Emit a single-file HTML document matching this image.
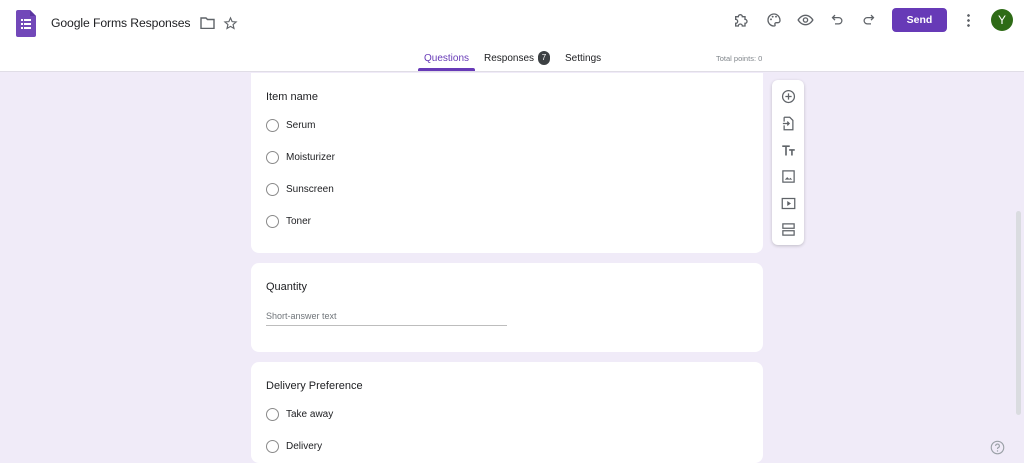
<!DOCTYPE html><html><head><style>
*{margin:0;padding:0;box-sizing:border-box}
body{width:1024px;height:463px;overflow:hidden;background:#f0ebf8;font-family:"Liberation Sans",Arial,sans-serif;position:relative;color:#202124}
.hdr{position:absolute;left:0;top:0;width:1024px;height:72px;background:#fff;border-bottom:1px solid #e0dde6}
.abs{position:absolute}
.card{position:absolute;left:251px;width:512px;background:#fff;border-radius:8px}
.q{position:absolute;left:15px;font-size:11px;color:#202124}
.opt{position:absolute;left:15px;font-size:10px;color:#202124;display:flex;align-items:center}
.opt i{display:inline-block;width:13px;height:13px;border:1.2px solid #8a8a8a;border-radius:50%;margin-right:7px}
.tb svg{position:absolute;left:9px}
</style></head><body>
<div class="hdr">
<svg class="abs" style="left:16px;top:10px" width="20" height="27" viewBox="0 0 20 27"><path d="M2 0h12l6 6v19a2 2 0 0 1-2 2H2a2 2 0 0 1-2-2V2a2 2 0 0 1 2-2z" fill="#7248b9"/><path d="M14 0v6h6z" fill="#5a35a0"/><g fill="#fff"><rect x="5" y="9" width="2" height="2"/><rect x="8" y="9" width="7" height="2"/><rect x="5" y="13" width="2" height="2"/><rect x="8" y="13" width="7" height="2"/><rect x="5" y="17" width="2" height="2"/><rect x="8" y="17" width="7" height="2"/></g></svg>
<div class="abs" style="left:51px;top:16px;font-size:12.2px;color:#202124;letter-spacing:-0.1px">Google Forms Responses</div>
<svg class="abs" style="left:200px;top:17px" width="15" height="12" viewBox="0 0 15 12"><path d="M1 1h5l1.5 1.5H14v9H1z" fill="none" stroke="#5f6368" stroke-width="1.4"/></svg>
<svg class="abs" style="left:223px;top:16px" width="15" height="15" viewBox="0 0 24 24"><path d="M12 3l2.6 6 6.4.5-4.9 4.2 1.5 6.3L12 16.6 6.4 20l1.5-6.3L3 9.5 9.4 9z" fill="none" stroke="#5f6368" stroke-width="1.8"/></svg>
<svg class="abs" style="left:733px;top:12px" width="16" height="16" viewBox="0 0 24 24"><path d="M4 7h4a3 3 0 0 1 6 0h4v4a3 3 0 0 1 0 6v4h-4a3 3 0 0 0-6 0H4v-4a3 3 0 0 0 0-6z" fill="none" stroke="#5f6368" stroke-width="2"/></svg>
<svg class="abs" style="left:766px;top:12px" width="16" height="16" viewBox="0 0 24 24"><path d="M12 3a9 9 0 0 0 0 18c1.5 0 2-1 1.5-2-.7-1.3.2-3 1.8-3H18a3 3 0 0 0 3-3c0-5.5-4-10-9-10z" fill="none" stroke="#5f6368" stroke-width="2"/><circle cx="7.5" cy="11" r="1.4" fill="#5f6368"/><circle cx="10" cy="7" r="1.4" fill="#5f6368"/><circle cx="15" cy="7" r="1.4" fill="#5f6368"/></svg>
<svg class="abs" style="left:797px;top:12px" width="17" height="16" viewBox="0 0 24 24"><path d="M1 12s4-7 11-7 11 7 11 7-4 7-11 7S1 12 1 12z" fill="none" stroke="#5f6368" stroke-width="2"/><circle cx="12" cy="12" r="3.2" fill="none" stroke="#5f6368" stroke-width="2"/></svg>
<svg class="abs" style="left:830px;top:12px" width="15" height="15" viewBox="0 0 24 24"><path d="M8 5L4 9l4 4M4 9h10a5 5 0 0 1 0 10H8" fill="none" stroke="#5f6368" stroke-width="2"/></svg>
<svg class="abs" style="left:861px;top:12px" width="15" height="15" viewBox="0 0 24 24"><path d="M16 5l4 4-4 4M20 9H10a5 5 0 0 0 0 10h6" fill="none" stroke="#5f6368" stroke-width="2"/></svg>
<div class="abs" style="left:892px;top:8px;width:55px;height:24px;background:#673ab7;border-radius:4px;color:#fff;font-size:10.5px;font-weight:bold;text-align:center;line-height:24px">Send</div>
<div class="abs" style="left:967px;top:13px;width:3px;height:14px;background:radial-gradient(circle,#5f6368 1.2px,transparent 1.5px) 0 0/3px 5px"></div>
<div class="abs" style="left:991px;top:9px;width:22px;height:22px;border-radius:50%;background:#2e6b16;color:#fff;font-size:12px;text-align:center;line-height:22px">Y</div>
<div class="abs" style="left:424px;top:53px;font-size:10px;color:#673ab7">Questions</div>
<div class="abs" style="left:418px;top:68px;width:57px;height:3px;background:#673ab7;border-radius:2px 2px 0 0"></div>
<div class="abs" style="left:484px;top:53px;font-size:10px;color:#202124">Responses</div>
<div class="abs" style="left:538px;top:51px;width:12px;height:14px;border-radius:6px;background:#3c4043;color:#fff;font-size:8px;text-align:center;line-height:14px">7</div>
<div class="abs" style="left:565px;top:53px;font-size:10px;color:#202124">Settings</div>
<div class="abs" style="left:716px;top:54px;font-size:7.5px;color:#80868b">Total points: 0</div>
</div>
<div class="card" style="top:73px;height:180px;border-radius:0 0 8px 8px">
<div class="q" style="top:18px">Item name</div>
<div class="opt" style="top:46px"><i></i>Serum</div>
<div class="opt" style="top:78px"><i></i>Moisturizer</div>
<div class="opt" style="top:110px"><i></i>Sunscreen</div>
<div class="opt" style="top:142px"><i></i>Toner</div>
</div>
<div class="card" style="top:263px;height:89px">
<div class="q" style="top:18px">Quantity</div>
<div class="abs" style="left:15px;top:48px;font-size:9px;color:#70757a">Short-answer text</div>
<div class="abs" style="left:15px;top:62px;width:241px;height:1px;background:#bdbdbd"></div>
</div>
<div class="card" style="top:362px;height:101px">
<div class="q" style="top:18px">Delivery Preference</div>
<div class="opt" style="top:46px"><i></i>Take away</div>
<div class="opt" style="top:78px"><i></i>Delivery</div>
</div>
<div class="abs tb" style="left:772px;top:80px;width:32px;height:165px;background:#fff;border-radius:6px;box-shadow:0 1px 3px rgba(0,0,0,.2)">
<svg style="top:9px" width="15" height="15" viewBox="0 0 24 24"><circle cx="12" cy="12" r="9.5" fill="none" stroke="#5f6368" stroke-width="2"/><path d="M12 7v10M7 12h10" stroke="#5f6368" stroke-width="2"/></svg>
<svg style="top:36px" width="15" height="15" viewBox="0 0 24 24"><path d="M5 2h9l5 5v15H5v-7M5 9V2" fill="none" stroke="#5f6368" stroke-width="2"/><path d="M3 12h10M10 9l3 3-3 3" fill="none" stroke="#5f6368" stroke-width="2"/></svg>
<svg style="top:63px" width="15" height="15" viewBox="0 0 24 24"><path d="M2 5h12M8 5v15M13 11h9M17.5 11v9" stroke="#5f6368" stroke-width="2.6"/></svg>
<svg style="top:89px" width="15" height="15" viewBox="0 0 24 24"><rect x="3" y="3" width="18" height="18" fill="none" stroke="#5f6368" stroke-width="2"/><path d="M6 17l4-4 3 3 2-2 3 3z" fill="#5f6368"/></svg>
<svg style="top:116px" width="15" height="15" viewBox="0 0 24 24"><rect x="2" y="4" width="20" height="16" fill="none" stroke="#5f6368" stroke-width="2"/><path d="M10 8v8l6-4z" fill="#5f6368"/></svg>
<svg style="top:142px" width="15" height="15" viewBox="0 0 24 24"><rect x="3" y="3" width="18" height="7" fill="none" stroke="#5f6368" stroke-width="2"/><rect x="3" y="14" width="18" height="7" fill="none" stroke="#5f6368" stroke-width="2"/></svg>
</div>
<div class="abs" style="left:1016px;top:211px;width:5px;height:204px;background:#dadce0;border-radius:3px"></div>
<svg class="abs" style="left:990px;top:440px" width="15" height="15" viewBox="0 0 24 24"><circle cx="12" cy="12" r="10" fill="none" stroke="#9aa0a6" stroke-width="1.8"/><path d="M9 9.5a3 3 0 1 1 4 2.8c-.8.4-1 1-1 2" fill="none" stroke="#9aa0a6" stroke-width="1.8"/><circle cx="12" cy="17.5" r="1.1" fill="#9aa0a6"/></svg>
</body></html>
